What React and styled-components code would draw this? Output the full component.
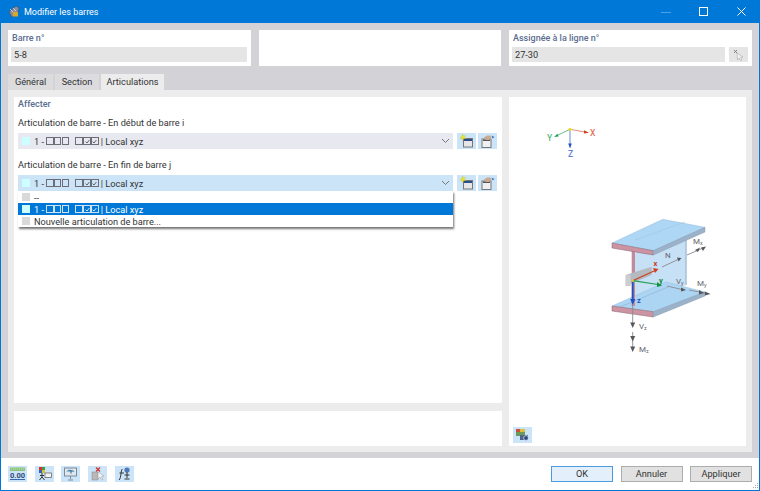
import React from "react";
import styled, { createGlobalStyle } from "styled-components";

const Global = createGlobalStyle`
  html, body { margin: 0; padding: 0; background: #fff; }
  body { font-family: Roboto, "Open Sans", "Liberation Sans", sans-serif; font-size: 9.2px; color: #333; }
`;

const Win = styled.div`
  width: 760px; height: 491px; box-sizing: border-box;
  border: 1px solid #0078d7; border-top: 0;
  display: flex; flex-direction: column; overflow: hidden; background: #fff;
`;
const TitleBar = styled.div`
  height: 23px; background: #0078d7; color: #fff; display: flex; align-items: center;
  padding-left: 6px; gap: 4px; flex: none;
`;
const TitleText = styled.span`flex: 1; font-size: 9px; padding-top: 1px;`;
const WinBtn = styled.div`
  width: 34px; height: 23px; display: flex; align-items: center; justify-content: center;
  opacity: ${p => p.$dim ? .3 : 1};
`;
const Body = styled.div`
  flex: 1; background: #d3d3d7; display: flex; flex-direction: column; padding: 7px 7px 6px;
  min-height: 0;
`;
const TopRow = styled.div`display: grid; grid-template-columns: 243px 242px 243px; gap: 8px; height: 36px; flex: none;`;
const Card = styled.div`background: #fff; padding: 2px 4px 0 3px; box-sizing: border-box; display: flex; flex-direction: column; gap: 3px;`;
const Caption = styled.div`font-weight: 500; font-size: 9px; color: #5b6d90; line-height: 12px; height: 12px; padding-left: 1px;`;
const FieldRow = styled.div`display: flex; gap: 4px;`;
const ReadOnly = styled.div`flex: 1; height: 15px; background: #e5e5e5; color: #333; line-height: 15px; padding-left: 3px;`;
const PickBtn = styled.div`width: 19px; height: 15px; background: #e5e5e5; display: flex; align-items: center; justify-content: center;`;
const Tabs = styled.div`display: flex; gap: 2px; margin-top: 8px; height: 16px; flex: none;`;
const Tab = styled.div`
  box-sizing: border-box; width: ${p => p.$w}px; text-align: center; background: ${p => p.$active ? "#ececec" : "#dcdcdf"}; line-height: 16px; color: #333;
`;
const Panel = styled.div`
  flex: 1; background: #ececec; padding: 7px 6px 6px; display: grid; min-height: 0;
  grid-template-columns: 488px 237px; grid-template-rows: 306px 35px; gap: 8px 7px;
`;
const Left = styled.div`background: #fff; padding: 2px 4px 0 4px; grid-column: 1; grid-row: 1;`;
const Section = styled.div`font-weight: 500; font-size: 9px; color: #5b6d90; line-height: 11px; margin-bottom: 7px;`;
const Label = styled.div`color: #333; line-height: 12px; margin-bottom: 4px;`;
const ComboRow = styled.div`display: flex; gap: 2px; margin-bottom: 10px; position: relative;`;
const Combo = styled.div`
  width: 435px; height: 16px; background: ${p => p.$open ? "#cbe4f8" : "#e8e8f0"}; display: flex; align-items: center;
  padding-left: 4px; box-sizing: border-box; margin-right: 2px;
`;
const Chevron = styled.svg`margin-left: auto; margin-right: 3px;`;
const Swatch = styled.span`
  width: 8px; height: 8px; background: ${p => p.$c}; display: inline-block; margin-right: 4px; flex: none;
`;
const ItemText = styled.span`color: ${p => p.$on ? "#fff" : "#333"}; display: inline-flex; align-items: center; white-space: pre;`;
const Squares = styled.span`display: inline-flex; gap: .3px; margin: 0 ${p => p.$r ?? 0}px 0 2px;`;
const Sq = styled.span`
  width: 5.6px; height: 5.6px; border: .7px solid ${p => p.$on ? "#cfe3f5" : "#6d6d78"}; display: inline-flex; box-sizing: content-box;
  align-items: center; justify-content: center;
`;
const IconBtn = styled.div`width: 19px; height: 16px; background: #cbe4f8; display: flex; align-items: center; justify-content: center;`;
const Menu = styled.div`
  position: absolute; left: 0; top: 16px; width: 435px; background: #fff; z-index: 2;
  box-shadow: 1px 2px 2px rgba(0,0,0,.55); box-sizing: border-box;
`;
const MenuItem = styled.div`
  height: 12px; display: flex; align-items: center; padding-left: 4px; background: ${p => p.$on ? "#0078d7" : "transparent"};
`;
const Right = styled.div`background: #fff; grid-column: 2; grid-row: 1 / span 2; position: relative; display: flex; flex-direction: column; justify-content: flex-end; padding: 0 0 3px 4px;`;
const Triad = styled.svg`position: absolute; left: 31px; top: 23px;`;
const Beam = styled.svg`position: absolute; left: 81px; top: 113px;`;
const ViewBtn = styled.div`width: 19px; height: 16px; background: #cbe4f8; display: flex; align-items: center; justify-content: center;`;
const Note = styled.div`background: #fff; grid-column: 1; grid-row: 2;`;
const Footer = styled.div`height: 32px; flex: none; background: #fff; display: flex; align-items: center; padding: 0 7px; gap: 7.7px; position: relative;`;
const ToolBtn = styled.div`width: 19px; height: 16px; background: #cbe4f8; display: flex; align-items: center; justify-content: center;`;
const Spacer = styled.div`flex: 1;`;
const DlgBtn = styled.div`
  width: 62px; height: 16px; box-sizing: border-box; text-align: center; line-height: 14px; color: #333;
  background: ${p => p.$primary ? "#e3f0fb" : "#e1e1e1"}; border: 1px solid ${p => p.$primary ? "#4d9bdc" : "#adadad"};
`;
const Buttons = styled.div`display: flex; gap: 7.5px;`;
const Grip = styled.svg`position: absolute; right: 0; bottom: 0;`;

const Check = ({ on }) => (
  <svg width="5" height="5" viewBox="0 0 5 5"><path d="M.6 2.6 2 4 4.4 1" fill="none" stroke={on ? "#fff" : "#444"} strokeWidth=".8" /></svg>
);
const HingeText = ({ on }) => (
  <ItemText $on={on}>
    1 -
    <Squares $r={4}><Sq $on={on} /><Sq $on={on} /><Sq $on={on} /></Squares>
    <Squares $r={2}><Sq $on={on} /><Sq $on={on}><Check on={on} /></Sq><Sq $on={on}><Check on={on} /></Sq></Squares>
    | Local xyz
  </ItemText>
);
const ChevronDown = () => (
  <Chevron width="9" height="6" viewBox="0 0 9 6"><path d="M1 1l3.5 3.5L8 1" fill="none" stroke="#777" strokeWidth="1" /></Chevron>
);
const NewIcon = () => (
  <svg width="15" height="14" viewBox="0 0 15 14">
    <rect x="4.5" y="4.5" width="9" height="8.5" fill="#e6e6e6" stroke="#777" />
    <rect x="5" y="5" width="8" height="2" fill="#2e4d88" />
    <path d="M3.5 0l.9 2 2-.6-1 1.8 1.3 1.3-2 .1-1.2 1.9-.6-2-2-.5 1.6-1.2z" fill="#e8e62a" stroke="#b8b840" strokeWidth=".3" />
  </svg>
);
const EditIcon = () => (
  <svg width="15" height="14" viewBox="0 0 15 14">
    <rect x="2" y="5" width="9" height="8.5" fill="#f0f0f0" stroke="#777" />
    <rect x="3" y="5.5" width="7" height="1.5" fill="#555" />
    <path d="M4 3.5 7 1.5h3.5l1 2-2.5 2.5H6z" fill="#c9a98f" />
    <path d="M11.5 1.5 14.5 3l-2 1.5z" fill="#3f78c4" />
  </svg>
);

const TriadIcon = () => (
  <Triad width="60" height="40" viewBox="0 0 60 40">
    <path d="M30 9.3 45 12" stroke="#e0907c" strokeWidth="1" />
    <path d="M44 10.3 49 12.7 44 13.6z" fill="#d0401c" />
    <path d="M30 9.3 17 15.5" stroke="#6ac08c" strokeWidth="1" />
    <path d="M14 17 17.5 13.8 18.6 16.4z" fill="#20a050" />
    <path d="M30 9.3V24" stroke="#7ea0e0" strokeWidth="1.2" />
    <path d="M28.2 23.5h3.6L30 28.5z" fill="#2050c0" />
    <circle cx="30" cy="9.3" r="1.5" fill="#f0d820" />
    <g fontSize="8.5" fontFamily="Roboto" fontWeight="500">
      <text x="50" y="16" fill="#dc7558">X</text>
      <text x="7" y="21" fill="#58bc82">Y</text>
      <text x="28" y="37" fill="#5c80d8">Z</text>
    </g>
  </Triad>
);

const BeamIcon = () => (
  <Beam width="130" height="150" viewBox="0 0 130 150">
    <path d="M45 43 96 18V75L45 92z" fill="#c6e0f6" />
    <path d="M96 18v57" stroke="#a6c0d8" strokeWidth="1.5" />
    <path d="M22 96 76 72l39 10-51.700 19.700z" fill="#acd5f4" stroke="#8db3d3" strokeWidth=".4" />
    <path d="M30 97 78 77" stroke="#86a4bc" strokeWidth=".5" />
    <path d="M22 96l41.300 5.700V107L22 101z" fill="#cc93a3" stroke="#85606c" strokeWidth=".5" />
    <path d="M63.300 101.700 115 82v4L63.300 107z" fill="#9bb2c8" stroke="#7d92a8" strokeWidth=".4" />
    <rect x="41.700" y="38" width="3.300" height="58" fill="#c08c9c" />
    <path d="M22 33 72.700 9.300 115 17.300 63.300 40.700z" fill="#aed6f5" stroke="#8db3d3" strokeWidth=".4" />
    <path d="M45 30 95 12" stroke="#98c0de" strokeWidth=".5" />
    <path d="M22 33l41.300 7.700V45L22 38z" fill="#cc93a3" stroke="#85606c" strokeWidth=".5" />
    <path d="M63.300 40.700 115 17.300V22L63.300 45z" fill="#9bb2c8" stroke="#7d92a8" strokeWidth=".4" />
    <path d="M35.700 65 61.700 56.700V65L35.700 76z" fill="#b5b9c0" />
    <path d="M35.700 65h5v11h-5z" fill="#cbcdd1" />

    <path d="M42.700 70.700 65 60.500" stroke="#c84020" strokeWidth="1.2" />
    <path d="M63 58 68.500 59 65 63z" fill="#d0401c" />
    <path d="M42.700 70.700 68 74.500" stroke="#20a050" strokeWidth="1.2" />
    <path d="M67 72 72 75.500 67 77z" fill="#109040" />
    <path d="M42.700 71V89" stroke="#1f4fc0" strokeWidth="1.8" />
    <path d="M40.200 89h5L42.700 95z" fill="#1f4fc0" />
    <circle cx="42.700" cy="70.700" r="1.300" fill="#d8c838" />

    <g stroke="#8a8a90" strokeWidth=".9" fill="none">
      <path d="M72 57 88 49.500" />
      <path d="M97 45 112 38.500" />
      <path d="M77 76 92 79.500" />
      <path d="M99 80 117 83.500" />
      <path d="M42.700 95V113" />
      <path d="M42.700 122V139" />
    </g>
    <g fill="#56565c">
      <path d="M87 47.500 91.500 48 88.500 51.500z" />
      <path d="M105 40 110 37.500 108 42zM111 37.500 116 36.500 113 41z" />
      <path d="M91 77.500 96 80 91 81.500z" />
      <path d="M109 80 114 83 109 84.500zM115 81.500 120.500 84 115 85.500z" />
      <path d="M40.200 112.500h5L42.700 118z" />
      <path d="M40.200 126h5L42.700 131.500zM40.200 136.500h5L42.700 142z" />
    </g>
    <g fontFamily="Roboto" fontSize="8" fill="#66666c">
      <text x="75" y="48">N</text>
      <text x="103" y="34">M<tspan fontSize="5.500" dy="1">x</tspan></text>
      <text x="86" y="74">V<tspan fontSize="5.500" dy="1">y</tspan></text>
      <text x="107" y="76">M<tspan fontSize="5.500" dy="1">y</tspan></text>
      <text x="49" y="119">V<tspan fontSize="5.500" dy="1">z</tspan></text>
      <text x="49" y="142">M<tspan fontSize="5.500" dy="1">z</tspan></text>
    </g>
    <g fontFamily="Roboto" fontSize="7.500" fontWeight="700">
      <text x="63.500" y="56" fill="#c84020">x</text>
      <text x="69" y="73" fill="#109040">y</text>
      <text x="47" y="93" fill="#1f4fc0">z</text>
    </g>
  </Beam>
);

export default function App() {
  return (
    <Win>
      <Global />
      <TitleBar>
        <svg width="13" height="13" viewBox="0 0 13 13">
          <path d="M2 7 9 1l3 2-2 7-5 2z" fill="#8c8c9c" stroke="#4a4a58" strokeWidth=".6" />
          <path d="M6 7h5v4.500H6z" fill="#d8a828" />
          <path d="M3 4l3 3M6 3l3 3" stroke="#dcdce4" strokeWidth=".8" />
        </svg>
        <TitleText>Modifier les barres</TitleText>
        <WinBtn $dim><svg width="10" height="10"><path d="M0 5.500h10" stroke="#fff" /></svg></WinBtn>
        <WinBtn><svg width="10" height="10"><rect x=".5" y=".5" width="8" height="8" fill="none" stroke="#fff" /></svg></WinBtn>
        <WinBtn><svg width="10" height="10"><path d="M.5.5l8 8M8.500.5l-8 8" stroke="#fff" /></svg></WinBtn>
      </TitleBar>
      <Body>
        <TopRow>
          <Card>
            <Caption>Barre n°</Caption>
            <FieldRow><ReadOnly>5-8</ReadOnly></FieldRow>
          </Card>
          <Card />
          <Card>
            <Caption>Assignée à la ligne n°</Caption>
            <FieldRow>
              <ReadOnly>27-30</ReadOnly>
              <PickBtn>
                <svg width="11" height="12" viewBox="0 0 11 12">
                  <path d="M1 1l3 3M4 1 1 4" stroke="#777" strokeWidth=".9" />
                  <path d="M4 4l6 4-2.500.4L9 11l-1.500.6-1.300-2.600L4.500 11z" fill="#f3f3f3" stroke="#aaa" strokeWidth=".6" />
                </svg>
              </PickBtn>
            </FieldRow>
          </Card>
        </TopRow>
        <Tabs>
          <Tab $w={45}>Général</Tab>
          <Tab $w={44}>Section</Tab>
          <Tab $w={63} $active>Articulations</Tab>
        </Tabs>
        <Panel>
          <Left>
            <Section>Affecter</Section>
            <Label>Articulation de barre - En début de barre i</Label>
            <ComboRow>
              <Combo><Swatch $c="#ccffff" /><HingeText /><ChevronDown /></Combo>
              <IconBtn><NewIcon /></IconBtn>
              <IconBtn><EditIcon /></IconBtn>
            </ComboRow>
            <Label>Articulation de barre - En fin de barre j</Label>
            <ComboRow>
              <Combo $open><Swatch $c="#ccffff" /><HingeText /><ChevronDown /></Combo>
              <IconBtn><NewIcon /></IconBtn>
              <IconBtn><EditIcon /></IconBtn>
              <Menu>
                <MenuItem><Swatch $c="#d9d9d9" /><ItemText>--</ItemText></MenuItem>
                <MenuItem $on><Swatch $c="#ccffff" /><HingeText on /></MenuItem>
                <MenuItem><Swatch $c="#d9d9d9" /><ItemText>Nouvelle articulation de barre...</ItemText></MenuItem>
              </Menu>
            </ComboRow>
          </Left>
          <Right>
            <TriadIcon />
            <BeamIcon />
            <ViewBtn>
              <svg width="15" height="14" viewBox="0 0 15 14">
                <path d="M1 1h9v7H1z" fill="#6d9a5c" />
                <path d="M1 1h4v3H1z" fill="#cc5040" />
                <path d="M5 1h5v3H5z" fill="#d8c040" />
                <path d="M5 7h8v5H5z" fill="#4d6688" />
                <circle cx="11" cy="10" r="2.400" fill="#2b4a80" stroke="#dfe8f0" strokeWidth=".7" />
              </svg>
            </ViewBtn>
          </Right>
          <Note />
        </Panel>
      </Body>
      <Footer>
        <ToolBtn>
          <svg width="17" height="14" viewBox="0 0 17 14">
            <rect x="1" y="0.500" width="15" height="3.500" fill="#8cc47c" />
            <path d="M2 2h13" stroke="#d8efd0" strokeDasharray="1 1" strokeWidth=".7" />
            <text x="8.500" y="11" textAnchor="middle" fontSize="7.500" fontWeight="700" fontFamily="Roboto" fill="#2d4a7a">0.00</text>
            <path d="M1 12.500h15" stroke="#3a66b0" />
          </svg>
        </ToolBtn>
        <ToolBtn>
          <svg width="15" height="14" viewBox="0 0 15 14">
            <rect x="2" y="0" width="3" height="3" fill="#d83030" /><rect x="5" y="0" width="3" height="3" fill="#40a040" />
            <rect x="2" y="3" width="3" height="3" fill="#3060c0" /><rect x="5" y="3" width="3" height="3" fill="#e0c030" />
            <path d="M5 6v4M2.500 13 5 10l2.500 3M3 8.500h4" stroke="#333" fill="none" />
            <rect x="8" y="6" width="6.500" height="4.500" fill="#f4f4f4" stroke="#555" strokeWidth=".7" />
          </svg>
        </ToolBtn>
        <ToolBtn>
          <svg width="15" height="14" viewBox="0 0 15 14">
            <rect x="1.500" y="1" width="12" height="8" fill="#dfe6ee" stroke="#7d8c9c" />
            <path d="M3.500 4.500C5 2 10 2 11.500 5L9 4.500 8 7.500 7 4.500z" fill="#4f87ad" />
            <path d="M7.500 9v3M5 13h5" stroke="#7d8c9c" />
          </svg>
        </ToolBtn>
        <ToolBtn>
          <svg width="15" height="14" viewBox="0 0 15 14">
            <path d="M6 .5l4 4M10 .5l-4 4" stroke="#d03030" strokeWidth="1.200" />
            <rect x="2" y="5" width="6" height="8" fill="#b9b9b9" stroke="#888" strokeWidth=".5" />
            <path d="M8 5l6 4-2.500.5L13 12.500l-1.500.5-1.500-3L8 12z" fill="#f4f4f4" stroke="#999" strokeWidth=".5" />
          </svg>
        </ToolBtn>
        <ToolBtn>
          <svg width="15" height="14" viewBox="0 0 15 14">
            <path d="M5.500 2C3.500 3 4.500 11 2 13" stroke="#333" fill="none" strokeWidth="1" />
            <path d="M2.500 6h4.500" stroke="#333" />
            <circle cx="10" cy="3" r="2.600" fill="#4f77b5" />
            <path d="M10 5v6M7.500 8h5M7.500 12h5" stroke="#333" />
          </svg>
        </ToolBtn>
        <Spacer />
        <Buttons>
          <DlgBtn $primary>OK</DlgBtn>
          <DlgBtn>Annuler</DlgBtn>
          <DlgBtn>Appliquer</DlgBtn>
        </Buttons>
        <Grip width="8" height="8" viewBox="0 0 8 8"><path d="M6 1h1v1H6zM4 3h1v1H4zM6 3h1v1H6zM2 5h1v1H2zM4 5h1v1H4zM6 5h1v1H6z" fill="#aaa" /></Grip>
      </Footer>
    </Win>
  );
}
